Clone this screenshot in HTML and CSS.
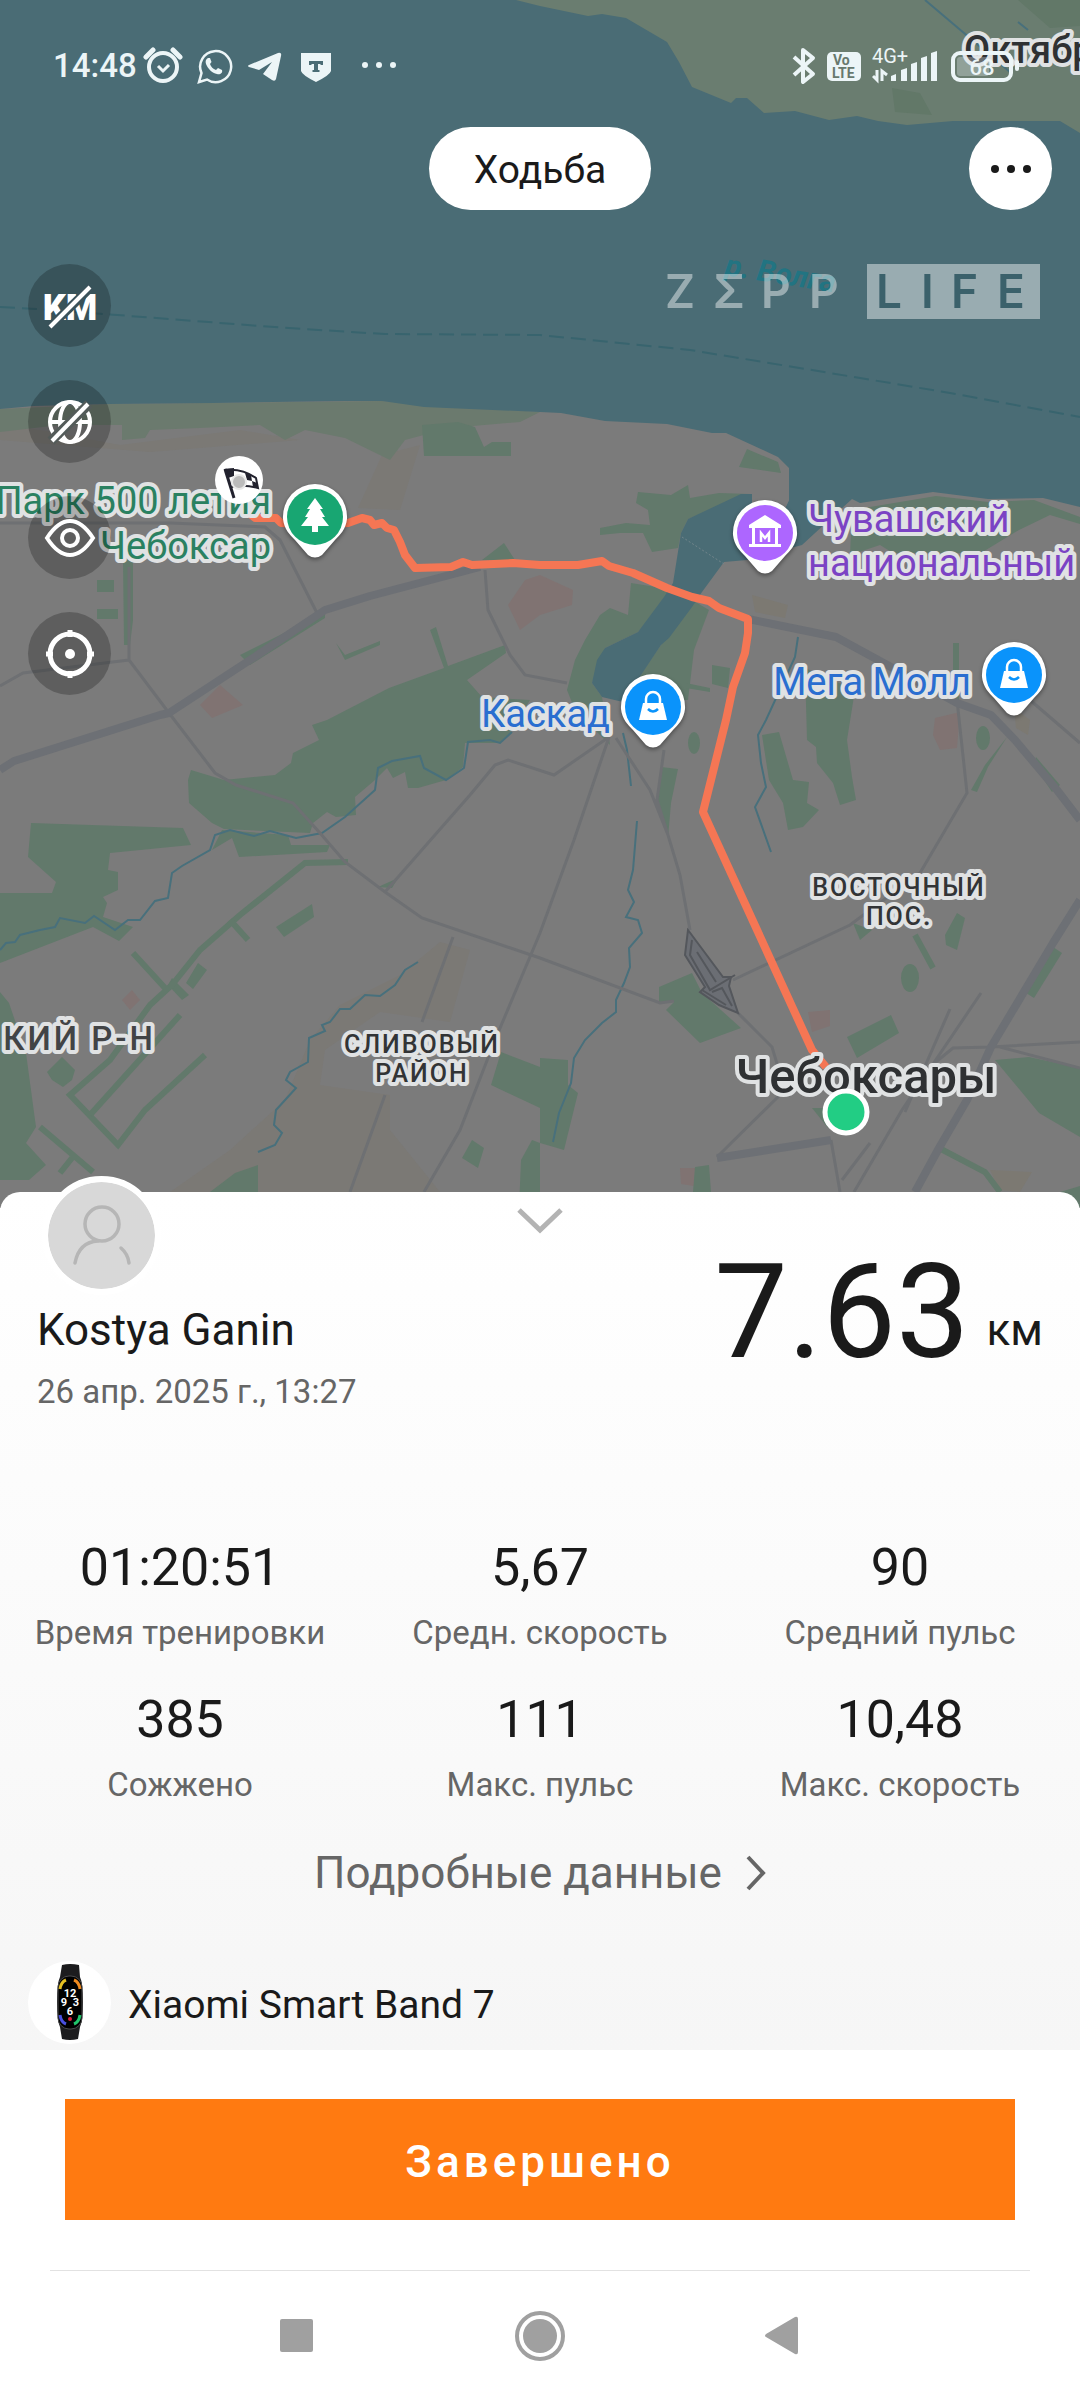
FILE: index.html
```
<!DOCTYPE html>
<html lang="ru">
<head>
    <meta charset="UTF-8">
    <meta name="viewport" content="width=device-width, initial-scale=1.0">
    <title>Ходьба</title>
    <link rel="stylesheet" href="styles.css">
</head>
<body>
    <main class="screen">
        <section class="map">
            <svg class="map-canvas" viewBox="0 0 1080 1208" preserveAspectRatio="xMidYMin slice">
                <rect width="1080" height="1208" class="land"/>

                <!-- sandy areas and pink blocks -->
                <g class="sand">
                    <path d="M170 1192L230 1150L285 1100L310 1040L340 1005L400 975L440 942L470 950L450 1022L380 1012L325 1050L320 1085L390 1095L390 1130L440 1192V1208H170z"/>
                    <path d="M382 455L420 445L400 510L358 508z"/>
                    <path d="M0 425L40 430L120 445L240 430L300 440L150 452L0 440z"/>
                </g>
                <g class="pink">
                    <path d="M540 575L573 590L572 605L540 615L520 630L508 605L525 580z"/>
                    <path d="M200 705L220 685L243 705L212 718z"/>
                    <path d="M122 1000L132 990L140 1000L130 1010z"/>
                    <path d="M935 718L960 712L957 748L940 750L933 735z"/>
                    <path d="M808 1012L830 1010V1026L812 1032z"/>
                    <path d="M680 1168H695L694 1186L681 1184z"/>
                </g>
                <g class="yellow">
                    <path d="M752 595L788 605L785 618L755 612z"/>
                    <path d="M1014 708L1030 720L1028 735L1016 728z"/>
                    <path d="M990 1170L1032 1172L1020 1192L1000 1190z"/>
                </g>

                <!-- parks -->
                <path class="park-light" d="M0 409L110 404L382 401L540 412L520 422L450 428L405 440L390 460L345 438L305 430L285 440L260 425L200 428L150 430L145 438L122 440V425L60 425L0 432z"/>
                <g class="park">
                    <path d="M422 425L458 422L475 427L484 447L492 442H511V456H424z"/>
                    <path d="M327 720L389 688L444 668L430 630L436 627L448 666L505 645L506 653L467 680L482 697L530 700L510 733L499 743L465 743L463 767L446 780L418 788H408L405 772L393 778L387 768L375 780L355 797L356 815L336 817L327 812L313 823L310 833L224 829L212 823L189 803L188 780L191 770L224 780L275 775L291 763L293 753L319 740L312 725z"/>
                    <path d="M31 823L183 828L191 845L110 853L108 870L118 872V890L103 897L107 903L103 917L133 927L119 941L93 927L0 963V893L52 893L56 882L28 857z"/>
                    <path d="M212 850L232 838L239 857L327 852L330 845L291 845L288 835L222 830z"/>
                    <path d="M276 927L312 904L314 917L284 937z"/>
                    <path d="M186 983L198 963L207 970L193 989z"/>
                    <path d="M172 978L189 995L182 1000L168 985z"/>
                    <path d="M0 992L9 1003L26 1053L36 1127L26 1143L46 1165L29 1180H0z"/>
                    <path d="M47 1072L62 1057L75 1070L72 1080L63 1087L52 1080z"/>
                    <path d="M501 1052L540 1067V1108L491 1085z"/>
                    <path d="M472 1140L484 1148L478 1168L462 1158z"/>
                    <path d="M532 1140L540 1143V1208H519L521 1160z"/>
                    <path d="M210 1192L235 1173L258 1165V1192z"/>
                    <path d="M97 580H114V592H97zM97 609H118V619H97zM123 560H133V620L130 645H124z"/>
                    <path d="M336 643L345 655L380 641V645L345 660z"/>
                    <path d="M482 560L504 543L515 560z"/>
                    <path d="M240 655L300 625L325 610L325 618L250 665z"/>
                    <path d="M378 887L398 878L392 888z"/>
                    <path d="M638 492L671 495L688 485L690 498L719 493L750 494L688 519L681 533L678 548L652 552L643 533H620L600 535V528L626 523L650 525L648 510L636 503z"/>
                    <path d="M747 449L778 462L781 473L739 467z"/>
                    <path d="M631 583L675 590L638 632L605 648L592 683L602 697L610 745L575 710L567 690L575 660L585 640L600 615L610 608L628 615z"/>
                    <path d="M692 600L709 610L694 650L688 700H623L661 645z"/>
                    <path d="M712 665L730 668L728 688L712 684zM686 683L710 688V692L686 688z"/>
                    <path d="M852 510L936 496L988 502L1034 500L1080 517V524L1050 515L1019 530L981 553H893L880 545L850 555z"/>
                    <path d="M762 735L779 732L793 780L809 782L807 803L819 810L803 827L788 830L783 803L769 780z"/>
                    <path d="M805 668L855 690L847 740L852 777L856 800L840 805L833 783L817 763L816 747L807 740z"/>
                    <path d="M661 767L678 769L671 803L668 838L657 803z"/>
                    <path d="M659 987L692 973L702 993L741 1028L700 1043L666 1010L674 1002L659 1002z"/>
                    <path d="M847 1037L891 1015L899 1033L857 1058z"/>
                    <path d="M995 1060L1029 1057L1080 1068V1137L1039 1113z"/>
                    <path d="M853 923L872 930L860 940z"/>
                    <path d="M957 913L965 918L957 950L946 945L945 935z"/>
                    <path d="M1007 737L988 767L977 792L971 790L985 765z"/>
                    <path d="M1053 947L1062 953L1034 998L1026 993z"/>
                    <path d="M1036 757L1060 785L1052 792L1034 765z"/>
                    <path d="M540 1058L568 1060V1085L578 1093L564 1150L540 1143z"/>
                    <path d="M695 1167L709 1165L711 1192H693z"/>
                    <path d="M812 1108L835 1108L828 1128z"/>
                    <path d="M1060 1192L1080 1186V1208z"/>
                    <ellipse cx="910" cy="978" rx="9" ry="14"/>
                    <ellipse cx="694" cy="743" rx="6" ry="11"/>
                    <ellipse cx="983" cy="738" rx="7" ry="12"/>
                </g>
                <g class="park-line">
                    <path d="M348 862L305 863L240 915L200 950L172 985L150 1005L110 1060L70 1095L118 1145L145 1110L205 1055"/>
                    <path d="M90 1115L180 1015M133 953L165 988M230 920L248 940M40 1127L93 1172M72 1158L60 1173"/>
                    <path d="M915 935L933 968M939 1148L985 1172L1000 1192M956 643V700"/>
                </g>

                <!-- the river, its north bank and the bay -->
                <path class="water" d="M0 0H1080V507L1043 498L988 499L933 492L860 503L852 499L802 545L747 560L724 562L702 592L692 607L669 638L661 645L623 702L602 697L592 683L597 660L605 648L638 632L664 597L673 583L681 533L688 519L741 494H752V520L781 517L789 500V468L778 457L726 433H712L667 424L605 421L561 413L540 412L424 407L382 401H344L213 403L110 404L34 406L0 409z"/>
                <path class="land" d="M753 494H789V500L781 517L753 530z"/>
                <path class="bank" d="M516 0L540 6L588 16L602 14L626 18L667 42L679 62L692 87L731 103L736 98H747L764 113L795 111L829 120L857 116L878 121L907 125L953 121H1060L1080 133V0z"/>
                <path class="bank-park" d="M892 88L920 93L932 115L895 112zM1018 0L1050 28L1080 26V0z"/>
                <path class="ferry" d="M0 307L36 309L130 316L260 326L350 332L385 334L540 335L690 350L830 373L950 393L1080 417"/>
                <path class="dam" d="M682 537L724 564"/>

                <g class="stream">
                    <path d="M0 950L6 943L15 942L20 935L40 930L55 927L60 918L85 923L94 916L115 930L128 920H140L155 901L168 898L172 873L182 866L210 850L215 835L230 830L254 836L270 831L296 838L322 833L345 817L375 790L378 768L392 761L420 756L424 768L446 780L464 768L468 742L490 740L500 743L512 732"/>
                    <path d="M418 962L405 970L395 985L380 996L365 995L350 1009L340 1009L330 1022L322 1025L325 1031L309 1038L308 1062L290 1072L286 1080L296 1088L276 1110L274 1125L282 1133L275 1145L258 1152"/>
                    <path d="M623 733L627 750L631 786M637 821L633 870L628 890L634 902L626 917L638 920L642 933L629 948L630 967L624 983L616 1000V1012L602 1023L585 1040L574 1058L571 1083L559 1113L553 1142"/>
                    <path d="M798 637L795 657L766 720L758 735L761 763L766 787L755 807L771 852M925 0L1010 72M1018 22L1028 30"/>
                </g>

                <!-- roads -->
                <g class="road">
                    <path d="M0 523H170L265 527L280 540L318 615M129 567V660L169 713L215 773L236 785L293 803L320 833L345 862L385 892L422 918L540 958L660 1003L674 1001M129 660L23 673L0 686"/>
                    <path d="M385 892L470 795L495 765L508 760L554 775L609 737L574 840L540 933L495 1040L460 1130L424 1192M485 570L488 610L510 655L525 675L567 683"/>
                    <path d="M350 1192L385 1095M422 1022L453 937M616 738L650 790L668 835L680 875L690 930M664 750L657 800L668 835M738 1013L772 1047L785 1090L717 1157"/>
                    <path d="M733 980L850 925L920 873L967 793L957 700M831 1140L840 1192M870 1143L842 1180M854 1192L902 1110L981 993M905 1112L950 1009M926 1070L953 1048L991 1047L1080 1042M1030 700L1080 743M1000 1047L1080 1068"/>
                </g>
                <g class="highway">
                    <path d="M0 770L14 761L160 715L169 713L250 660L325 610L370 596L480 567"/>
                    <path d="M748 619L836 637L891 667L957 703L991 715L1015 740L1057 790L1080 820M1080 900L1053 943L991 1047L967 1100L939 1148L915 1192M717 1158L831 1140"/>
                </g>
                <path class="junction" d="M688 930L723 977L731 977L729 986L738 1013L719 1005L700 992L705 987L685 955z"/>
                <path class="junction-lines" d="M692 940L690 955L710 990L735 975M697 952L716 982M702 990L726 1005M712 992L722 988L732 1006"/>

                <polyline class="route" points="245,510 255,518 276,518 281,523 315,525 348,523 362,518 370,520 374,525 382,523 387,528 394,530 400,542 405,555 415,568 451,567 463,562 472,565 513,563 540,565 578,565 602,561 609,566 633,573 667,588 692,597 709,601 719,608 748,619 748,633 745,653 733,687 726,720 703,812 812,1050 826,1067"/>

                <!-- place names -->
                <text class="river-name" x="724" y="275" transform="rotate(9 724 275)">р. Волга</text>
                <g class="place park-name">
                    <text x="271" y="514" text-anchor="end">Парк 500 летия</text>
                    <text x="271" y="559" text-anchor="end">Чебоксар</text>
                </g>
                <g class="place museum-name">
                    <text x="808" y="532">Чувашский</text>
                    <text x="808" y="576">национальный</text>
                </g>
                <g class="place mall-name">
                    <text x="610" y="727" text-anchor="end">Каскад</text>
                    <text x="971" y="695" text-anchor="end">Мега Молл</text>
                </g>
                <g class="place district" text-anchor="middle">
                    <text x="899" y="896">ВОСТОЧНЫЙ</text>
                    <text x="899" y="925">ПОС.</text>
                    <text x="422" y="1053">СЛИВОВЫЙ</text>
                    <text x="422" y="1082">РАЙОН</text>
                </g>
                <text class="place region" x="156" y="1050" text-anchor="end">КИЙ Р-Н</text>
                <text class="place town" x="964" y="63">Октябр</text>
                <text class="place city" x="866" y="1093" text-anchor="middle">Чебоксары</text>

                <!-- pins -->
                <defs>
                    <path id="pin" d="M0 -33A32 33 0 0 1 32 2C31 12 25 18 20 23L7 38Q0 43 -7 38L-20 23C-25 18 -31 12 -32 2A32 33 0 0 1 0 -33z"/>
                    <g id="bag">
                        <path d="M-10 -4H10L14 13H-14z"/>
                        <path d="M-7 -3V-8A7 7 0 0 1 7 -8V-3" fill="none" stroke="#fff" stroke-width="2.5"/>
                        <path d="M-5 2Q0 7 5 2" fill="none" stroke="#0a93fb" stroke-width="2.5"/>
                    </g>
                </defs>
                <g class="pin" transform="translate(315 517)">
                    <use href="#pin"/>
                    <circle r="28" fill="#18a672"/>
                    <path d="M0 -19L8 -8H5L10 0H7L14 9H3V15H-3V9H-14L-7 0H-10L-5 -8H-8z"/>
                </g>
                <g class="pin" transform="translate(765 533)">
                    <use href="#pin"/>
                    <circle r="28" fill="#ad66ff"/>
                    <path d="M0 -18L16 -8V-5H-16V-8zM-13 -5H-10V11H-13zM10 -5H13V11H10zM-16 11H16V14H-16z"/>
                    <path d="M-4 9V0L0 5L4 0V9" fill="none" stroke="#fff" stroke-width="2.5"/>
                </g>
                <g class="pin" transform="translate(1014 675)">
                    <use href="#pin"/>
                    <circle r="28" fill="#0a93fb"/>
                    <use href="#bag"/>
                </g>
                <g class="pin" transform="translate(653 707)">
                    <use href="#pin"/>
                    <circle r="28" fill="#0a93fb"/>
                    <use href="#bag"/>
                </g>

                <!-- finish flag and start point -->
                <g transform="translate(239 480)">
                    <circle r="24" fill="#fff"/>
                    <path d="M-14 -10Q3 -12 17 -2L19 8Q5 4 -7 7" fill="#fff" stroke="#22222e" stroke-width="2"/>
                    <path d="M-15 -11L-5 -12V-4L-11 -2zM6 -7L12 -5L13 1L8 0zM13 1L18 3L19 8L14 7z" fill="#22222e"/>
                    <path d="M-14 -11L-5 18" stroke="#22222e" stroke-width="3"/>
                    <circle cx="0" cy="2" r="7" fill="#bbb" stroke="#e8e8e8" stroke-width="2"/>
                </g>
                <circle cx="846" cy="1112" r="21" fill="#22cd84" stroke="#fff" stroke-width="5"/>
            </svg>

            <div class="overlay">
                <div class="status-bar">
                    <span class="clock">14:48</span>
                    <div class="status-left">
                        <svg class="status-icon" viewBox="0 0 40 40">
                            <circle cx="20" cy="21" r="14" fill="none" stroke="currentColor" stroke-width="4"/>
                            <path d="M15 20L20 25L26 19" fill="none" stroke="currentColor" stroke-width="3"/>
                            <path d="M3 11L10 4M37 11L30 4" stroke="currentColor" stroke-width="5" stroke-linecap="round"/>
                        </svg>
                        <svg class="status-icon" viewBox="0 0 40 40">
                            <path d="M5 36L7.500 27A15.500 15.500 0 1 1 13 33.500z" fill="none" stroke="currentColor" stroke-width="2.500"/>
                            <path d="M14 12C12 13 11 15 12 18C14 23 18 27 23 28C26 29 29 27 28 24L24 22L22 24C19 23 17 21 16 18L17.500 16L16 12z" fill="currentColor"/>
                        </svg>
                        <svg class="status-icon" viewBox="0 0 40 40">
                            <path d="M4 19L33 7Q37 6 36 10L31 33Q30 36 27 34L18 28L27 16L14 24L4 21Q2 20 4 19z" fill="currentColor"/>
                        </svg>
                        <svg class="status-icon" viewBox="0 0 40 40">
                            <path fill-rule="evenodd" d="M5 7H35V25Q34 29 20 36Q6 29 5 25zM13 15V19H15.500V18H18V24H16.500V26H23.500V24H22V18H24.500V19H27V15z" fill="currentColor"/>
                        </svg>
                        <svg class="status-icon status-more" viewBox="0 0 40 40">
                            <g fill="currentColor"><circle cx="6" cy="19" r="3"/><circle cx="20" cy="19" r="3"/><circle cx="34" cy="19" r="3"/></g>
                        </svg>
                    </div>
                    <div class="status-right">
                        <svg width="24" height="40" viewBox="0 0 24 40">
                            <path d="M2 11L21 28L11 36V4L21 12L2 29" fill="none" stroke="currentColor" stroke-width="4" stroke-linejoin="round"/>
                        </svg>
                        <svg width="34" height="40" viewBox="0 0 34 40">
                            <rect y="6" width="34" height="29" rx="5" fill="currentColor"/>
                            <g class="volte"><text x="6" y="19">Vo</text><text x="5" y="32">LTE</text></g>
                        </svg>
                        <svg width="68" height="40" viewBox="0 0 68 40">
                            <text class="network" x="0" y="17" fill="currentColor">4G+</text>
                            <path d="M19 30L24 28V35H19zM29 24L35 22V35H29zM39 18L45 16V35H39zM49 12L55 10V35H49zM59 7L65 5V35H59z" fill="currentColor"/>
                            <path d="M5 24V34L1 30M10 35V25L15 29" fill="none" stroke="currentColor" stroke-width="3"/>
                        </svg>
                        <svg width="68" height="40" viewBox="0 0 68 40">
                            <rect x="2" y="7" width="58" height="27" rx="7" fill="none" stroke="currentColor" stroke-width="4"/>
                            <rect x="6" y="11" width="32" height="19" rx="3" fill="currentColor" opacity="0.3"/>
                            <rect x="64" y="14" width="4" height="11" rx="2" fill="currentColor"/>
                            <text class="battery" x="31" y="29" text-anchor="middle" fill="currentColor">68</text>
                        </svg>
                    </div>
                </div>

                <div class="top-bar">
                    <button type="button" class="activity">Ходьба</button>
                    <button type="button" class="more" aria-label="Ещё">
                        <svg width="42" height="10" viewBox="0 0 42 10"><circle cx="5" cy="5" r="4"/><circle cx="21" cy="5" r="4"/><circle cx="37" cy="5" r="4"/></svg>
                    </button>
                </div>

                <div class="map-tools">
                    <div class="tool-list">
                        <button type="button" class="tool" aria-label="Километры">
                            <svg viewBox="0 0 48 48">
                                <text class="km" x="24" y="38" text-anchor="middle">KM</text>
                                <path d="M4 45L45 5" stroke="#3a525a" stroke-width="9"/>
                                <path d="M4 45L44 5" stroke="#fff" stroke-width="4"/>
                            </svg>
                        </button>
                        <button type="button" class="tool" aria-label="Карта">
                            <svg viewBox="0 0 48 48">
                                <g fill="none" stroke="#fff" stroke-width="4">
                                    <circle cx="24" cy="24" r="20"/><ellipse cx="24" cy="24" rx="10" ry="20"/><path d="M4 24H44"/>
                                </g>
                                <path d="M5 43L43 6" stroke="#535b59" stroke-width="10"/>
                                <path d="M6 43L42 6" stroke="#fff" stroke-width="4"/>
                            </svg>
                        </button>
                        <button type="button" class="tool" aria-label="Показать карту">
                            <svg viewBox="0 0 48 48">
                                <path d="M1 24Q12 7 24 7T47 24Q36 41 24 41T1 24z" fill="none" stroke="#fff" stroke-width="4"/>
                                <circle cx="24" cy="24" r="8" fill="none" stroke="#fff" stroke-width="4"/>
                            </svg>
                        </button>
                        <button type="button" class="tool" aria-label="Моё место">
                            <svg viewBox="0 0 48 48">
                                <circle cx="24" cy="24" r="20" fill="none" stroke="#fff" stroke-width="5"/>
                                <path d="M24 0V7M24 41V48M0 24H7M41 24H48" stroke="#fff" stroke-width="5"/>
                                <circle cx="24" cy="24" r="5" fill="#fff"/>
                            </svg>
                        </button>
                    </div>
                    <svg class="brand" width="374" height="55" viewBox="0 0 374 55">
                        <text x="-1 47 95 143" y="44">ZΣPP</text>
                        <rect x="201" width="173" height="55"/>
                        <text class="brand-life" x="210 255 285 331" y="44">LIFE</text>
                    </svg>
                </div>
            </div>
        </section>

        <section class="sheet">
            <button type="button" class="collapse" aria-label="Свернуть">
                <svg width="46" height="26" viewBox="0 0 46 26"><path d="M2 2L23 22L44 2" fill="none" stroke="#b3b3b3" stroke-width="5"/></svg>
            </button>
            <div class="summary">
                <div class="profile">
                    <svg class="avatar" viewBox="0 0 107 107">
                        <circle cx="53.500" cy="53.500" r="53.500" fill="#d8d8d8"/>
                        <g fill="none" stroke="#b6b6b6" stroke-width="3.500" stroke-linecap="round">
                            <circle cx="54" cy="42" r="17"/>
                            <path d="M27 81Q31 60 50 59M73 66Q80 72 81 81"/>
                        </g>
                    </svg>
                    <h1 class="name">Kostya Ganin</h1>
                    <time class="date">26 апр. 2025 г., 13:27</time>
                </div>
                <div class="distance">
                    <span class="distance-value">7.63</span>
                    <span class="distance-unit">км</span>
                </div>
            </div>

            <dl class="stats">
                <div class="stat"><dd>01:20:51</dd><dt>Время тренировки</dt></div>
                <div class="stat"><dd>5,67</dd><dt>Средн. скорость</dt></div>
                <div class="stat"><dd>90</dd><dt>Средний пульс</dt></div>
                <div class="stat"><dd>385</dd><dt>Сожжено</dt></div>
                <div class="stat"><dd>111</dd><dt>Макс. пульс</dt></div>
                <div class="stat"><dd>10,48</dd><dt>Макс. скорость</dt></div>
            </dl>

            <a class="details" href="#">
                Подробные данные
                <svg width="20" height="36" viewBox="0 0 20 36"><path d="M2 2L17 18L2 34" fill="none" stroke="#666" stroke-width="4"/></svg>
            </a>

            <div class="device">
                <svg class="device-icon" viewBox="0 0 83 83">
                    <circle cx="41.500" cy="41.500" r="41.500" fill="#fff"/>
                    <path d="M34 4Q42 2 51 4L52 16Q55 22 55 41T52 66L50 78Q42 80 34 78L32 66Q29 60 29 41T32 16z" fill="#1c1c1e"/>
                    <rect x="30" y="15" width="24" height="53" rx="11" fill="#000" stroke="#4a4a4c"/>
                    <g fill="none" stroke-width="3">
                        <path d="M32 28Q33 21 38 19" stroke="#e5c022"/>
                        <path d="M52 28Q51 21 46 19" stroke="#f08a1e"/>
                        <path d="M32 54Q33 61 38 63" stroke="#4a50e0"/>
                        <path d="M52 54Q51 61 46 63" stroke="#21c46a"/>
                    </g>
                    <circle cx="42" cy="58" r="2" fill="#d8203c"/>
                    <g class="watch-face" text-anchor="middle">
                        <text x="42" y="36">12</text>
                        <text x="36" y="45">9</text>
                        <text x="48" y="45">3</text>
                        <text x="42" y="54">6</text>
                    </g>
                </svg>
                <span>Xiaomi Smart Band 7</span>
            </div>
        </section>

        <footer class="footer">
            <button type="button" class="finish">Завершено</button>
            <nav class="system-nav">
                <button type="button" aria-label="Недавние"><svg viewBox="0 0 50 50"><rect x="8" y="8" width="33" height="33" rx="2"/></svg></button>
                <button type="button" aria-label="Домой"><svg viewBox="0 0 50 50"><circle cx="25" cy="25" r="17"/><circle cx="25" cy="25" r="23" fill="none" stroke="#a0a0a0" stroke-width="4"/></svg></button>
                <button type="button" aria-label="Назад"><svg viewBox="0 0 50 50"><path d="M8 23L37 6Q40 5 40 8V41Q40 44 37 43L8 26Q6 25 8 23z"/></svg></button>
            </nav>
        </footer>
    </main>
</body>
</html>
```

FILE: styles.css
```
* {
    box-sizing: border-box;
}

body {
    margin: 0;
    background-color: #fff;
    color: #1a1a1a;
    font-family: Roboto, "Noto Sans", sans-serif;
}

button {
    padding: 0;
    border: none;
    background: none;
    color: inherit;
    font-family: inherit;
    cursor: pointer;
}

svg {
    display: block;
}

.screen {
    min-height: 100vh;
}

/* map */
.map {
    position: relative;
    height: 1208px;
    overflow: hidden;
}

.map-canvas {
    position: absolute;
    inset: 0;
    width: 100%;
    height: 100%;
}

.land { fill: #7b7b7b; }
.water { fill: #4a6c75; }
.bank { fill: #6a7d70; }
.bank-park { fill: #627868; }
.sand { fill: #7b7975; }
.pink { fill: #807372; }
.yellow { fill: #7c7972; }
.park { fill: #62796b; }
.park-light { fill: #6b7a6e; }

.park-line {
    fill: none;
    stroke: #62796b;
    stroke-width: 6;
}

.ferry {
    fill: none;
    stroke: #38646e;
    stroke-width: 2;
    stroke-dasharray: 15 7;
}

.dam {
    stroke: #71858b;
    stroke-dasharray: 2 2;
}

.stream {
    fill: none;
    stroke: #48707c;
    stroke-width: 2;
}

.road {
    fill: none;
    stroke: #6e7073;
    stroke-width: 3;
}

.highway {
    fill: none;
    stroke: #6d7075;
    stroke-width: 8;
    stroke-linejoin: round;
}

.junction {
    fill: #6b6e74;
    stroke: #54575c;
    stroke-width: 2;
}

.junction-lines {
    fill: none;
    stroke: #54575c;
    stroke-width: 2;
}

.route {
    fill: none;
    stroke: #f57654;
    stroke-width: 8;
    stroke-linejoin: round;
}

.place {
    stroke: #e0e2e3;
    stroke-width: 8;
    stroke-linejoin: round;
    paint-order: stroke;
    font-size: 38px;
}

.park-name { fill: #2a8161; }
.museum-name { fill: #7b43c4; }
.mall-name { fill: #2a6ed0; }

.district {
    fill: #323436;
    font-size: 25px;
    font-weight: 500;
    letter-spacing: 2px;
}

.region {
    fill: #424446;
    font-size: 33px;
    font-weight: 500;
    letter-spacing: 3px;
}

.town {
    fill: #2f3133;
    font-weight: 500;
}

.city {
    fill: #2f3133;
    font-size: 49px;
    font-weight: 500;
}

.river-name {
    fill: #227482;
    font-size: 30px;
    font-weight: 700;
    font-style: italic;
}

.pin {
    fill: #fff;
    filter: drop-shadow(0 2px 2px rgba(0, 0, 0, 0.4));
}

/* controls over the map */
.overlay {
    position: relative;
}

.status-bar {
    display: flex;
    align-items: center;
    gap: 6px;
    height: 127px;
    padding: 4px 61px 0 53px;
    color: #ecf5f7;
}

.clock {
    font-size: 33px;
    font-weight: 500;
}

.status-left,
.status-right {
    display: flex;
    gap: 11px;
}

.status-right {
    margin-left: auto;
}

.status-icon {
    width: 40px;
    height: 40px;
}

.status-more {
    margin-left: 12px;
}

.volte {
    fill: #67796e;
    font-size: 14px;
    font-weight: 700;
}

.network {
    font-size: 20px;
}

.battery {
    font-size: 22px;
    font-weight: 500;
}

.top-bar {
    display: grid;
    grid-template-columns: 1fr auto 1fr;
    padding: 0 28px;
}

.activity {
    grid-column: 2;
    height: 83px;
    padding: 3px 45px 0;
    border-radius: 42px;
    background-color: #fff;
    font-size: 39px;
}

.more {
    display: flex;
    align-items: center;
    justify-content: center;
    justify-self: end;
    width: 83px;
    height: 83px;
    border-radius: 50%;
    background-color: #fff;
    fill: #1a1a1a;
}

.map-tools {
    display: flex;
    justify-content: space-between;
    align-items: flex-start;
    padding: 54px 40px 0 28px;
}

.tool-list {
    display: flex;
    flex-direction: column;
    gap: 33px;
}

.tool {
    display: flex;
    align-items: center;
    justify-content: center;
    width: 83px;
    height: 83px;
    border-radius: 50%;
    background-color: rgba(0, 0, 0, 0.23);
}

.tool svg {
    width: 48px;
    height: 48px;
    overflow: visible;
}

.km {
    fill: #fff;
    font-size: 36px;
    font-weight: 900;
}

.brand {
    fill: #fff;
    opacity: 0.44;
    font-family: Inter, sans-serif;
    font-size: 46px;
    font-weight: 600;
}

.brand-life {
    fill: #2a5560;
}

/* workout sheet */
.sheet {
    position: relative;
    margin-top: -16px;
    padding-bottom: 6px;
    border-radius: 20px 20px 0 0;
    background: linear-gradient(#fff, #f6f6f6);
}

.collapse {
    position: absolute;
    top: 16px;
    left: 50%;
    transform: translateX(-50%);
}

.summary {
    display: flex;
    justify-content: space-between;
    align-items: flex-end;
    padding: 0 37px;
}

.avatar {
    width: 119px;
    height: 119px;
    margin: -16px 0 9px 5px;
    border: 6px solid #fff;
    border-radius: 50%;
    background-color: #fff;
}

.name {
    margin: 0;
    font-size: 44px;
    font-weight: 400;
    line-height: 52px;
}

.date {
    display: block;
    margin-top: 16px;
    color: #666;
    font-size: 33px;
    line-height: 40px;
}

.distance {
    display: flex;
    align-items: flex-end;
    gap: 17px;
    padding-bottom: 34px;
}

.distance-value {
    font-size: 131px;
    line-height: 132px;
}

.distance-unit {
    padding-bottom: 22px;
    font-size: 44px;
    line-height: 52px;
}

.stats {
    display: grid;
    grid-template-columns: repeat(3, 1fr);
    row-gap: 37px;
    margin: 0;
    padding-top: 126px;
    text-align: center;
}

.stat {
    display: flex;
    flex-direction: column;
    gap: 15px;
}

.stat dd {
    margin: 0;
    font-size: 52px;
    line-height: 60px;
}

.stat dt {
    color: #666;
    font-size: 33px;
    line-height: 40px;
}

.details {
    display: flex;
    align-items: center;
    justify-content: center;
    gap: 24px;
    margin-top: 42px;
    color: #666;
    font-size: 44px;
    line-height: 52px;
    text-decoration: none;
}

.device {
    display: flex;
    align-items: center;
    gap: 17px;
    margin-top: 62px;
    padding: 0 28px;
    font-size: 39px;
}

.device span {
    padding-top: 4px;
}

.device-icon {
    width: 83px;
    height: 83px;
}

.watch-face {
    fill: #fff;
    font-size: 11px;
    font-weight: 700;
}

/* footer */
.footer {
    padding-top: 49px;
    background-color: #fff;
}

.finish {
    display: block;
    width: calc(100% - 130px);
    height: 121px;
    margin: 0 auto 50px;
    padding-top: 4px;
    background-color: #ff7a11;
    color: #fff;
    font-size: 44px;
    font-weight: 500;
    letter-spacing: 4px;
}

.system-nav {
    display: flex;
    justify-content: center;
    gap: 193px;
    margin: 0 50px;
    padding: 40px 0 38px;
    border-top: 1px solid #e2e2e2;
}

.system-nav svg {
    width: 50px;
    height: 50px;
    fill: #a0a0a0;
}
```
